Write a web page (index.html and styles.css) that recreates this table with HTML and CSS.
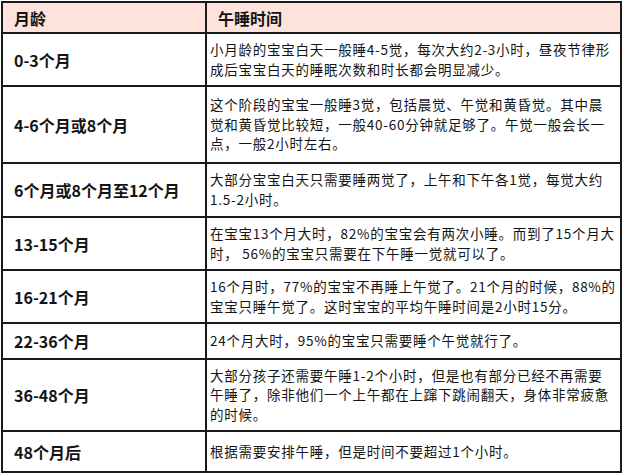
FILE: index.html
```html
<!DOCTYPE html>
<html lang="zh">
<head>
<meta charset="utf-8">
<link rel="stylesheet" href="styles.css">
</head>
<body>
<table class="sleep">
  <tr class="head">
    <th class="age">月龄</th>
    <th class="desc">午睡时间</th>
  </tr>
  <tr class="r2l">
    <td class="age">0-3个月</td>
    <td class="desc">小月龄的宝宝白天一般睡4-5觉，每次大约2-3小时，昼夜节律形<br>成后宝宝白天的睡眠次数和时长都会明显减少。</td>
  </tr>
  <tr class="r3l">
    <td class="age">4-6个月或8个月</td>
    <td class="desc">这个阶段的宝宝一般睡3觉，包括晨觉、午觉和黄昏觉。其中晨<br>觉和黄昏觉比较短，一般40-60分钟就足够了。午觉一般会长一<br>点，一般2小时左右。</td>
  </tr>
  <tr class="r2m">
    <td class="age">6个月或8个月至12个月</td>
    <td class="desc">大部分宝宝白天只需要睡两觉了，上午和下午各1觉，每觉大约<br>1.5-2小时。</td>
  </tr>
  <tr class="r2l">
    <td class="age">13-15个月</td>
    <td class="desc">在宝宝13个月大时，82%的宝宝会有两次小睡。而到了15个月大<br>时， 56%的宝宝只需要在下午睡一觉就可以了。</td>
  </tr>
  <tr class="r2l">
    <td class="age">16-21个月</td>
    <td class="desc">16个月时，77%的宝宝不再睡上午觉了。21个月的时候，88%的<br>宝宝只睡午觉了。这时宝宝的平均午睡时间是2小时15分。</td>
  </tr>
  <tr class="r1s">
    <td class="age">22-36个月</td>
    <td class="desc">24个月大时，95%的宝宝只需要睡个午觉就行了。</td>
  </tr>
  <tr class="r3s">
    <td class="age">36-48个月</td>
    <td class="desc">大部分孩子还需要午睡1-2个小时，但是也有部分已经不再需要<br>午睡了，除非他们一个上午都在上蹿下跳闹翻天，身体非常疲惫<br>的时候。</td>
  </tr>
  <tr class="r1l">
    <td class="age">48个月后</td>
    <td class="desc">根据需要安排午睡，但是时间不要超过1个小时。</td>
  </tr>
</table>
</body>
</html>
```

FILE: styles.css
```css
html, body {
  margin: 0;
  padding: 0;
  background: #ffffff;
}

body {
  padding: 1px 0 0 1px;
  font-family: "Noto Sans CJK SC", "Noto Sans", sans-serif;
  color: #141414;
}

.sleep {
  border-collapse: collapse;
  width: 621px;
  table-layout: fixed;
}

.sleep th,
.sleep td {
  border: 2px solid #1a1a1a;
  vertical-align: middle;
  padding: 0;
  white-space: nowrap;
  overflow: hidden;
}

.sleep th {
  background: #fde3dc;
  font-size: 16px;
  font-weight: bold;
  text-align: left;
  height: 29px;
  line-height: 24px;
}

.sleep th.age {
  width: 191px;
  padding-left: 11px;
}

.sleep th.desc {
  padding-left: 11px;
}

.sleep td.age {
  font-size: 16px;
  font-weight: bold;
  padding-left: 11px;
  line-height: 24px;
}

.sleep td.desc {
  font-size: 13.5px;
  line-height: 19.6px;
  padding-left: 3px;
  letter-spacing: 0.75px;
}

.r2l td { height: 51px; }
.r3l td { height: 75px; }
.r2m td { height: 52px; }
.r1s td { height: 34px; }
.r3s td { height: 70px; }
.r1l td { height: 39px; }
```
